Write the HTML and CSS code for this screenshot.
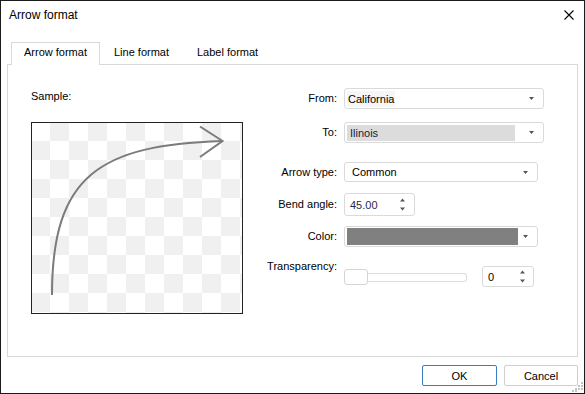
FILE: index.html
```html
<!DOCTYPE html>
<html lang="en">
<head>
  <meta charset="UTF-8">
  <title>Arrow format</title>
  <link rel="stylesheet" href="styles.css">
</head>
<body>
  <div class="dialog">
    <header class="titlebar">
      <span>Arrow format</span>
      <svg class="close" width="10" height="10" viewBox="0 0 10 10">
        <path d="M0.5 0.5L9.5 9.5M9.5 0.5L0.5 9.5" stroke="#000" stroke-width="1.1"/>
      </svg>
    </header>

    <div class="tabs">
      <div class="tab active">Arrow format</div>
      <div class="tab">Line format</div>
      <div class="tab">Label format</div>
    </div>

    <div class="panel">
      <div class="sample">
        <div class="sample-label">Sample:</div>
        <div class="preview">
          <svg width="210" height="190" viewBox="0 0 210 190">
            <path d="M20 172C20 52 68 22 190.5 18" fill="none" stroke="#7b7b7b" stroke-width="2"/>
            <path d="M168 3.5L190.5 18L168 34" fill="none" stroke="#7b7b7b" stroke-width="2"/>
          </svg>
        </div>
      </div>

      <div class="fields">
        <div class="row">
          <label>From:</label>
          <div class="combo combo-wide">
            <span class="value-box">California</span>
            <svg class="caret" width="5" height="3"><path d="M0 0h5L2.5 3z"/></svg>
          </div>
        </div>
        <div class="row row-to">
          <label>To:</label>
          <div class="combo combo-wide">
            <span class="selection">Ilinois</span>
            <svg class="caret" width="5" height="3"><path d="M0 0h5L2.5 3z"/></svg>
          </div>
        </div>
        <div class="row row-type">
          <label>Arrow type:</label>
          <div class="combo combo-mid">
            <span class="plain">Common</span>
            <svg class="caret" width="5" height="3"><path d="M0 0h5L2.5 3z"/></svg>
          </div>
        </div>
        <div class="row row-bend">
          <label>Bend angle:</label>
          <div class="spin spin-bend">
            <span class="spin-value">45.00</span>
            <svg width="5" height="13"><path d="M0 3.5L2.5 0.5L5 3.5zM0 9.5h5L2.5 12.5z"/></svg>
          </div>
        </div>
        <div class="row row-color">
          <label>Color:</label>
          <div class="combo combo-mid combo-color">
            <span class="swatch"></span>
            <svg class="caret" width="5" height="3"><path d="M0 0h5L2.5 3z"/></svg>
          </div>
        </div>
        <div class="row row-alpha">
          <label>Transparency:</label>
          <div class="slider">
            <span class="thumb"></span>
            <span class="track"></span>
          </div>
          <div class="spin spin-alpha">
            <span>0</span>
            <svg width="5" height="13"><path d="M0 3.5L2.5 0.5L5 3.5zM0 9.5h5L2.5 12.5z"/></svg>
          </div>
        </div>
      </div>
    </div>

    <footer class="buttons">
      <button class="btn btn-primary">OK</button>
      <button class="btn">Cancel</button>
    </footer>

    <svg class="grip" width="11" height="11" viewBox="0 0 11 11">
      <rect x="9" y="1" width="2" height="2"/>
      <rect x="6" y="4" width="2" height="2"/>
      <rect x="9" y="4" width="2" height="2"/>
      <rect x="3" y="7" width="2" height="2"/>
      <rect x="6" y="7" width="2" height="2"/>
      <rect x="9" y="7" width="2" height="2"/>
      <rect x="0" y="9" width="2" height="2"/>
      <rect x="3" y="9" width="2" height="2"/>
    </svg>
  </div>
</body>
</html>
```

FILE: styles.css
```css
body {
  margin: 0;
  font: 11px "Liberation Sans", Arial, sans-serif;
  color: #000;
  background: #fff;
}
.dialog {
  position: relative;
  width: 585px;
  height: 394px;
  box-sizing: border-box;
  border: 1px solid #1b1b1b;
  display: flex;
  flex-direction: column;
}
.titlebar {
  height: 28px;
  display: flex;
  align-items: center;
  justify-content: space-between;
  padding: 0 10px 0 8px;
  font-size: 12px;
}
.tabs {
  display: flex;
  margin: 13px 0 0 10px;
}
.tab {
  box-sizing: border-box;
  height: 22px;
  line-height: 19px;
  padding: 0 13px;
  border: 1px solid transparent;
  border-bottom: 0;
}
.tab.active {
  position: relative;
  height: 23px;
  margin-bottom: -1px;
  padding: 0 12px;
  border-color: #d9d9d9;
  background: #fff;
}
.panel {
  margin: 0 6px;
  height: 293px;
  box-sizing: border-box;
  border: 1px solid #d9d9d9;
  display: flex;
  padding: 23px 0 0 23px;
}
.sample {
  width: 212px;
}
.sample-label {
  line-height: 14px;
  margin-top: 1px;
}
.preview {
  margin-top: 19px;
  width: 212px;
  height: 192px;
  box-sizing: border-box;
  border: 1px solid #222;
  background: repeating-conic-gradient(#f0f0f0 0 25%, #fff 0 50%) -1px -1px / 38px 38px;
}
.preview svg {
  display: block;
}
.fields {
  margin-left: 19px;
}
.row {
  display: flex;
  align-items: center;
}
.row label {
  flex: none;
  width: 75px;
  margin-right: 7px;
  text-align: right;
  line-height: 13px;
}
.row-to { margin-top: 13px; }
.row-type { margin-top: 19px; }
.row-bend { margin-top: 11px; }
.row-color { margin-top: 10px; }
.row-alpha {
  margin-top: 13px;
  align-items: flex-start;
}
.combo {
  box-sizing: border-box;
  height: 21px;
  border: 1px solid #dadada;
  border-radius: 3px;
  display: flex;
  align-items: center;
  padding: 0 2px;
  background: #fff;
}
.combo-wide { width: 200px; }
.combo-mid {
  width: 194px;
  height: 20px;
}
.combo-color { height: 21px; }
.caret {
  margin-left: auto;
  margin-right: 7px;
  fill: #555;
}
.value-box {
  background: #f6f6f6;
  padding: 2px 1px;
}
.selection {
  width: 165px;
  height: 16px;
  line-height: 16px;
  padding-left: 3px;
  background: #dcdcdc;
  color: #1a1a3a;
}
.plain {
  padding-left: 5px;
}
.swatch {
  width: 171px;
  height: 17px;
  background: #808080;
}
.spin {
  box-sizing: border-box;
  border: 1px solid #dadada;
  border-radius: 3px;
  display: flex;
  align-items: center;
  justify-content: space-between;
  padding: 0 9px 0 5px;
  fill: #555;
}
.spin-bend {
  width: 71px;
  height: 23px;
}
.spin-value {
  color: #2a2a4a;
}
.spin-alpha {
  width: 52px;
  height: 21px;
  margin-top: 6px;
  margin-left: 15px;
  padding-right: 8px;
}
.slider {
  width: 123px;
  height: 16px;
  margin-top: 9px;
  display: flex;
  align-items: center;
}
.thumb {
  box-sizing: border-box;
  width: 24px;
  height: 16px;
  border: 1px solid #d4d4d4;
  border-radius: 3px;
  background: #fff;
}
.track {
  flex: 1;
  height: 7px;
  border: 1px solid #dcdcdc;
  border-left: 0;
  border-radius: 0 3px 3px 0;
}
.buttons {
  display: flex;
  justify-content: flex-end;
  gap: 7px;
  margin-top: 8px;
  padding-right: 6px;
}
.btn {
  box-sizing: border-box;
  width: 74px;
  height: 21px;
  padding: 0;
  border: 1px solid #d0d0d0;
  border-radius: 2px;
  background: #fff;
  font: inherit;
  color: #000;
}
.btn-primary {
  width: 75px;
  border-color: #3b7cc0;
}
.grip {
  position: absolute;
  right: 1px;
  bottom: 1px;
  fill: #c4c4c4;
}
```
